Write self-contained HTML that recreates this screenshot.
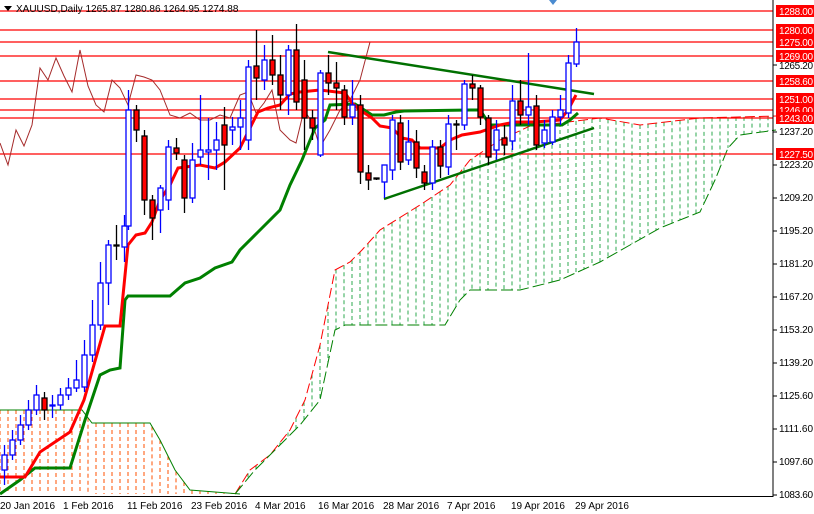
<!DOCTYPE html>
<html><head><meta charset="utf-8"><style>
html,body{margin:0;padding:0;background:#fff;width:814px;height:514px;overflow:hidden}
svg{display:block}
text{font-family:"Liberation Sans",sans-serif;font-size:10px}
</style></head><body>
<svg id="s" width="814" height="514" xmlns="http://www.w3.org/2000/svg">
<rect width="814" height="514" fill="#fff"/>
<g id="cloud"></g>
<g id="hl" stroke="#f00" stroke-width="1.3">
<line x1="0" x2="773" y1="11" y2="11"/><line x1="0" x2="773" y1="30" y2="30"/>
<line x1="0" x2="773" y1="42" y2="42"/><line x1="0" x2="773" y1="56" y2="56"/>
<line x1="0" x2="773" y1="81" y2="81"/><line x1="0" x2="773" y1="99" y2="99"/>
<line x1="0" x2="773" y1="110" y2="110"/><line x1="0" x2="773" y1="118" y2="118"/>
<line x1="0" x2="773" y1="154" y2="154"/>
</g>
<polyline fill="none" stroke="#a52a2a" stroke-width="1" points="0,143 8,165 16,130 24,146 32,125 40,68 48,80 56,58 64,76 72,92 80,50 88,86 96,105 104,112 112,80 120,88 128,105 136,75 144,77 152,80 160,90 170,115 180,118 190,113 200,120 210,120 220,115 230,118 240,95 248,92 256,113 264,103 272,90 280,130 290,140 296,143 304,110 312,122 320,147 330,130 340,110 350,100 360,80 370,42"/>
<polyline fill="none" stroke="#008000" stroke-width="3" points="0,494 20,480 35,468 70,468 85,420 100,375 110,370 120,368 125,300 128,296 170,296 185,283 200,278 215,268 232,262 240,250 258,232 280,210 290,185 302,160 315,128 325,120 330,105 355,104 372,115 384,115 396,112 404,111 470,110 480,110 490,125 540,125 562,125 570,120 578,113"/>
<polyline fill="none" stroke="#f00" stroke-width="3" points="0,477 25,477 40,452 55,442 70,432 84,400 105,326 120,326 128,245 136,235 145,233 152,222 160,200 170,185 178,168 200,165 215,168 225,162 240,148 250,128 258,112 268,108 280,105 290,94 300,92 320,90 345,93 352,103 360,110 372,118 380,126 392,128 402,138 412,140 420,148 440,148 450,140 462,135 480,132 500,125 515,122 535,122 560,120 568,110 576,95"/>
<line x1="328" y1="52" x2="594" y2="94" stroke="#007000" stroke-width="2.5"/>
<line x1="384" y1="199" x2="594" y2="128" stroke="#007000" stroke-width="2.5"/>
<g id="candles"></g>
<line x1="773" y1="0" x2="773" y2="497" stroke="#000"/>
<line x1="0" y1="496.5" x2="773" y2="496.5" stroke="#000"/>
<g id="ax" fill="#000"></g>
<polygon points="4,6 12,6 8,11" fill="#000"/>
<text x="16" y="12">XAUUSD,Daily  1265.87 1280.86 1264.95 1274.88</text>
<polygon points="549,0 557,0 553,5" fill="#4a8bd0"/>
<g fill="#000">
<text x="0" y="509">20 Jan 2016</text><text x="63" y="509">1 Feb 2016</text>
<text x="127" y="509">11 Feb 2016</text><text x="191" y="509">23 Feb 2016</text>
<text x="255" y="509">4 Mar 2016</text><text x="318" y="509">16 Mar 2016</text>
<text x="383" y="509">28 Mar 2016</text><text x="447" y="509">7 Apr 2016</text>
<text x="511" y="509">19 Apr 2016</text><text x="575" y="509">29 Apr 2016</text>
</g>
<g fill="#000">
<text x="779" y="69" textLength="34">1265.20</text><text x="779" y="135" textLength="34">1237.20</text>
<text x="779" y="168" textLength="34">1223.20</text><text x="779" y="201" textLength="34">1209.20</text>
<text x="779" y="234" textLength="34">1195.20</text><text x="779" y="267" textLength="34">1181.20</text>
<text x="779" y="300" textLength="34">1167.20</text><text x="779" y="333" textLength="34">1153.20</text>
<text x="779" y="366" textLength="34">1139.20</text><text x="779" y="399" textLength="34">1125.60</text>
<text x="779" y="432" textLength="34">1111.60</text><text x="779" y="465" textLength="34">1097.60</text>
<text x="779" y="498" textLength="34">1083.60</text>
</g>
<g id="tags"></g>
</svg>
<script>
var NS="http://www.w3.org/2000/svg";
function el(p,t,a){var e=document.createElementNS(NS,t);for(var k in a)e.setAttribute(k,a[k]);p.appendChild(e);return e;}
var ax=document.getElementById('ax');
[65,132,165,198,231,264,297,330,363,396,429,462,495].forEach(function(y){el(ax,'line',{x1:773,x2:777,y1:y,y2:y,stroke:'#000'});});
var tags=document.getElementById('tags');
[[11,'1288.00'],[30,'1280.00'],[42,'1275.00'],[56,'1269.00'],[81,'1258.60'],[99,'1251.00'],[110,'1246.00'],[118,'1243.00'],[154,'1227.50']].forEach(function(t){
 el(tags,'rect',{x:776,y:t[0]-6,width:38,height:12,fill:'#f00'});
 var tx=el(tags,'text',{x:779,y:t[0]+4,fill:'#fff',textLength:34});tx.textContent=t[1];
});
var cl=document.getElementById('cloud');
function interp(pts,x){for(var i=0;i<pts.length-1;i++){if(x>=pts[i][0]&&x<=pts[i+1][0]){var t=(x-pts[i][0])/(pts[i+1][0]-pts[i][0]||1);return pts[i][1]+t*(pts[i+1][1]-pts[i][1]);}}return pts[pts.length-1][1];}
var oU=[[0,410],[82,410],[92,423],[150,423],[160,440],[175,470],[190,490],[240,494]];
var gU=[[235,494],[250,470],[270,455],[290,430],[305,400],[320,345],[335,270],[350,262],[362,250],[380,230],[420,205],[450,185],[470,160],[500,140],[530,126],[560,123],[600,118],[640,125],[700,118],[776,116]];
var gL=[[235,494],[255,470],[280,445],[300,425],[320,400],[335,330],[345,325],[445,325],[460,300],[470,290],[520,290],[560,280],[600,262],[630,245],[660,228],[700,212],[715,180],[728,148],[740,135],[776,130]];
for(var x=0;x<240;x+=8){el(cl,'line',{x1:x,x2:x,y1:interp(oU,x),y2:494,stroke:'#ff5000','stroke-dasharray':'4,3'});}
for(var x=240;x<773;x+=8){var a=interp(gU,x),b=interp(gL,x);el(cl,'line',{x1:x,x2:x,y1:a,y2:b,stroke:'#2ea84f','stroke-dasharray':'4,3'});}
el(cl,'polyline',{points:oU.map(function(p){return p.join(',')}).join(' '),fill:'none',stroke:'#008000','stroke-width':1});
el(cl,'polyline',{points:gU.map(function(p){return p.join(',')}).join(' '),fill:'none',stroke:'#f00','stroke-width':1,'stroke-dasharray':'10,4'});
el(cl,'polyline',{points:gL.map(function(p){return p.join(',')}).join(' '),fill:'none',stroke:'#008000','stroke-width':1,'stroke-dasharray':'12,4'});
var C=[[4,455,470,445,485,1],[12,440,455,430,460,1],[20,425,440,415,445,1],[28,410,425,400,430,1],[36,395,410,385,415,1],[44,398,410,392,420,0],[52,405,406,395,418,1],[60,395,405,388,410,1],[68,388,395,378,400,1],[76,380,388,360,392,1],[84,355,387,340,392,1],[92,325,355,300,362,1],[100,283,325,262,330,1],[108,245,283,240,305,1],[116,245,246,225,260,0],[124,226,247,215,262,1],[128,110,226,90,230,1],
[136,110,130,105,142,0],[144,136,200,130,215,0],[152,200,218,195,240,0],[160,188,210,185,233,1],[168,147,200,140,210,1],[176,148,153,138,160,0],[184,160,198,155,213,0],[192,160,198,143,203,1],[200,150,157,95,165,1],[208,150,152,118,180,1],[216,140,150,122,170,1],[224,125,145,107,190,0],[232,127,130,117,145,1],[240,118,127,100,150,1],
[248,67,140,60,150,1],[256,66,78,30,100,0],[264,60,80,45,90,1],[272,60,75,35,85,0],[280,75,95,55,110,0],[288,50,95,45,115,1],[296,50,102,24,110,0],[304,80,118,60,150,0],[312,118,128,110,140,0],[320,73,155,70,157,1],[328,73,83,55,95,0],[336,83,88,62,110,0],[344,90,117,85,125,0],[352,105,117,80,125,1],[360,105,172,95,184,0],[368,173,180,165,190,0],[376,178,179,178,180,0],
[384,165,182,165,198,1],[392,120,170,115,180,1],[400,123,162,115,170,0],[408,142,160,120,165,1],[416,142,168,130,178,0],[424,172,183,165,190,0],[432,147,183,140,190,1],[440,147,166,140,178,0],[448,124,167,115,175,1],[456,124,125,120,150,0],[464,84,125,80,130,1],[472,84,88,75,100,0],[480,88,117,85,125,0],[488,118,157,115,165,0],
[496,130,150,120,160,1],[504,138,145,125,155,0],[512,101,141,85,150,1],[520,101,115,80,125,0],[528,107,115,53,125,1],[536,106,145,95,150,0],[544,130,143,120,148,1],[552,117,142,110,145,1],[560,110,117,95,125,1],[568,63,113,55,118,1],[576,42,64,28,67,1]];
var cg=document.getElementById('candles');
C.forEach(function(c){
 var col=c[5]?'#0000ff':'#000';
 el(cg,'line',{x1:c[0]+.5,x2:c[0]+.5,y1:c[3],y2:c[4],stroke:col,'stroke-width':1.3});
 el(cg,'rect',{x:c[0]-2,y:c[1],width:5,height:Math.max(1,c[2]-c[1]),fill:c[5]?'#fff':'#f00',stroke:col,'stroke-width':1.3});
});
</script>
</body></html>
